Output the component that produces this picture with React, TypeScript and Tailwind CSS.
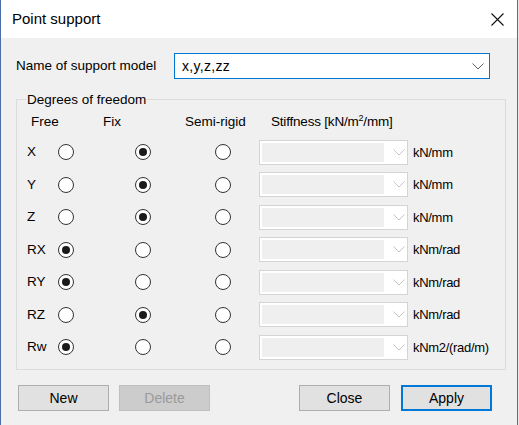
import React from "react";

type Dof = "free" | "fix" | "semi";

const rows: { name: string; state: Dof; unit: string }[] = [
  { name: "X", state: "fix", unit: "kN/mm" },
  { name: "Y", state: "fix", unit: "kN/mm" },
  { name: "Z", state: "fix", unit: "kN/mm" },
  { name: "RX", state: "free", unit: "kNm/rad" },
  { name: "RY", state: "free", unit: "kNm/rad" },
  { name: "RZ", state: "fix", unit: "kNm/rad" },
  { name: "Rw", state: "free", unit: "kNm2/(rad/m)" },
];

function Radio({ checked }: { checked: boolean }) {
  return (
    <span className="flex h-4 w-4 shrink-0 items-center justify-center rounded-full border border-[#333333] bg-white">
      {checked && <span className="h-2 w-2 rounded-full bg-[#1a1a1a]" />}
    </span>
  );
}

function Chevron({ color }: { color: string }) {
  return (
    <svg width="12" height="7" viewBox="0 0 12 7" fill="none">
      <path d="M0.5 0.5 L6 6 L11.5 0.5" stroke={color} strokeWidth="1" />
    </svg>
  );
}

function StiffnessBox() {
  return (
    <div className="flex h-[25px] w-[149px] shrink-0 items-stretch border border-[#d4d4d4] bg-white">
      <div className="my-[2px] ml-[2px] w-[122px] bg-[#efefef]" />
      <div className="flex flex-1 items-center justify-center pl-[6px]">
        <Chevron color="#c4c4c4" />
      </div>
    </div>
  );
}

function Button({
  label,
  disabled,
  primary,
}: {
  label: string;
  disabled?: boolean;
  primary?: boolean;
}) {
  const base = "flex h-[26px] w-[91px] items-center justify-center text-[14px]";
  if (disabled)
    return (
      <div className={`${base} border border-[#bfbfbf] bg-[#cccccc] text-[#9a9a9a]`}>
        {label}
      </div>
    );
  if (primary)
    return (
      <div className={`${base} border-2 border-[#0078d7] bg-[#e1e1e1] text-black`}>
        {label}
      </div>
    );
  return (
    <div className={`${base} border border-[#adadad] bg-[#e1e1e1] text-black`}>
      {label}
    </div>
  );
}

export default function App() {
  return (
    <div
      className="flex h-[425px] w-[519px] overflow-hidden bg-[#f0f0f0] text-black"
      style={{ fontFamily: '"Liberation Sans", Arial, sans-serif' }}
    >
      <div className="w-px shrink-0 bg-[#4a6ea9]" />
      <div className="flex w-[516px] flex-col">
        {/* title bar */}
        <div className="flex h-[38px] shrink-0 items-center justify-between bg-white pl-[11px] pr-[13px]">
          <span className="text-[15px]">Point support</span>
          <svg width="13" height="13" viewBox="0 0 13 13">
            <path d="M0.5 0.5 L12.5 12.5 M12.5 0.5 L0.5 12.5" stroke="#111" strokeWidth="1.1" />
          </svg>
        </div>

        {/* body */}
        <div className="flex flex-col pl-[15px] pt-[15px]">
          <div className="flex items-center">
            <span className="w-[158px] text-[13.5px]">Name of support model</span>
            <div className="flex h-[26px] w-[316px] items-center justify-between border border-[#0078d7] bg-white pl-[7px] pr-[5px]">
              <span className="text-[14px] tracking-[0.3px]">x,y,z,zz</span>
              <Chevron color="#606060" />
            </div>
          </div>

          {/* group box */}
          <div className="relative mt-[20px] h-[271px] w-[490px] border border-[#dcdcdc]">
            <span className="absolute -top-[8px] left-[9px] bg-[#f0f0f0] px-[1px] text-[13.5px] leading-4">
              Degrees of freedom
            </span>
            <div className="flex h-[32px] items-end pl-[14px] text-[13.5px]">
              <span className="w-[72px]">Free</span>
              <span className="w-[82px]">Fix</span>
              <span className="w-[86px]">Semi-rigid</span>
              <span className="tracking-[-0.2px]">
                Stiffness [kN/m<sup className="text-[9px]">2</sup>/mm]
              </span>
            </div>
            <div className="mt-[4px] flex flex-col">
              {rows.map((r) => (
                <div key={r.name} className="flex h-[32.5px] items-center pl-[10px] text-[13.5px]">
                  <span className="w-[31px]">{r.name}</span>
                  <Radio checked={r.state === "free"} />
                  <span className="ml-[61px]">
                    <Radio checked={r.state === "fix"} />
                  </span>
                  <span className="ml-[64px]">
                    <Radio checked={r.state === "semi"} />
                  </span>
                  <span className="ml-[28px]">
                    <StiffnessBox />
                  </span>
                  <span className="ml-[5px] text-[13px] tracking-[-0.3px]">{r.unit}</span>
                </div>
              ))}
            </div>
          </div>

          {/* buttons */}
          <div className="mt-[15px] flex pl-[2px]">
            <Button label="New" />
            <div className="ml-[10px]">
              <Button label="Delete" disabled />
            </div>
            <div className="ml-[89px]">
              <Button label="Close" />
            </div>
            <div className="ml-[11px]">
              <Button label="Apply" primary />
            </div>
          </div>
        </div>
      </div>
      <div className="w-px shrink-0 bg-[#6b6b6b]" />
      <div className="w-px shrink-0 bg-[#e8e8e8]" />
    </div>
  );
}
